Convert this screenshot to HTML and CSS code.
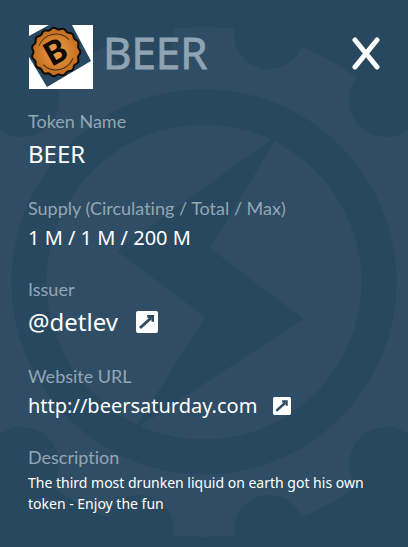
FILE: index.html
```
<!DOCTYPE html>
<html lang="en">
<head>
  <meta charset="UTF-8">
  <meta name="viewport" content="width=device-width, initial-scale=1.0">
  <title>BEER</title>
  <link rel="stylesheet" href="styles.css">
</head>
<body>
  <main class="token-card">
    <svg class="backdrop" width="510" height="510" viewBox="-51 27 510 510" aria-hidden="true">
      <circle class="light" cx="204" cy="282" r="255"/>
      <g class="dark">
        <circle cx="269" cy="34" r="35"/>
        <circle cx="139" cy="34" r="35"/>
        <circle cx="386" cy="100" r="37"/>
        <circle cx="22" cy="100" r="37"/>
        <circle cx="386" cy="464" r="37"/>
        <circle cx="22" cy="464" r="37"/>
        <circle cx="269" cy="530" r="35"/>
        <circle cx="139" cy="530" r="35"/>
        <path d="M279 134L117 251L205 317L134 430L303 319L210 248Z"/>
      </g>
      <circle class="ring" cx="204" cy="282" r="175"/>
    </svg>

    <header class="token-header">
      <svg class="logo" viewBox="0 0 64 64" role="img" aria-label="BEER logo">
        <defs>
          <radialGradient id="cap">
            <stop offset="0" stop-color="#eda24a"/>
            <stop offset="0.6" stop-color="#d4812f"/>
            <stop offset="1" stop-color="#bf6a1e"/>
          </radialGradient>
        </defs>
        <path fill="#fff" d="M0 0H64V64H0Z"/>
        <path fill="#28485f" d="M20 0H43L62 36L18 62L0 32V11Z"/>
        <path id="capEdge" fill="url(#cap)" stroke="#120b05" stroke-width="2" stroke-linejoin="round"/>
        <circle cx="27" cy="27" r="18" fill="none" stroke="#4a2a0c" stroke-width="1" stroke-dasharray="36 20.500" transform="rotate(20 27 27)"/>
        <text class="logo-letter" x="27" y="38" text-anchor="middle" transform="rotate(-29 27 27)">B</text>
      </svg>
      <h1 class="title">BEER</h1>
      <button type="button" class="close" aria-label="Close">
        <svg width="28" height="33" viewBox="0 0 28 33"><path d="M3 3L25 30M25 3L3 30"/></svg>
      </button>
    </header>

    <dl class="details">
      <div class="item">
        <dt>Token Name</dt>
        <dd class="large">BEER</dd>
      </div>
      <div class="item">
        <dt>Supply (Circulating / Total / Max)</dt>
        <dd>1 M / 1 M / 200 M</dd>
      </div>
      <div class="item">
        <dt>Issuer</dt>
        <dd class="large">
          <a href="#">@detlev
            <svg class="open-icon" viewBox="0 0 22 22"><rect width="22" height="22" rx="2"/><path class="shaft" d="M4 17L15 7"/><path d="M11 4H18V11L15.500 10.500V7H11.500Z"/></svg>
          </a>
        </dd>
      </div>
      <div class="item">
        <dt>Website URL</dt>
        <dd>
          <a href="http://beersaturday.com">http://beersaturday.com
            <svg class="open-icon" viewBox="0 0 22 22"><rect width="22" height="22" rx="2"/><path class="shaft" d="M4 17L15 7"/><path d="M11 4H18V11L15.500 10.500V7H11.500Z"/></svg>
          </a>
        </dd>
      </div>
      <div class="item">
        <dt>Description</dt>
        <dd class="description">The third most drunken liquid on earth got his own token - Enjoy the fun</dd>
      </div>
    </dl>
  </main>

  <script>
    // scalloped edge of the bottle cap
    let d = '';
    for (let i = 0; i <= 120; i++) {
      const a = i / 120 * Math.PI * 2;
      const r = 23.5 + Math.cos(a * 15) * 0.9;
      d += (i ? 'L' : 'M') + (27 + r * Math.cos(a)).toFixed(1) + ' ' + (27 + r * Math.sin(a)).toFixed(1);
    }
    document.getElementById('capEdge').setAttribute('d', d + 'Z');
  </script>
</body>
</html>
```

FILE: styles.css
```
* {
  box-sizing: border-box;
}
body {
  margin: 0;
  background: #28485f;
  color: #fff;
  font-family: 'Noto Sans', 'Open Sans', sans-serif;
}
.token-card {
  position: relative;
  min-height: 100vh;
  padding: 25px 28px;
  overflow: hidden;
}
.backdrop {
  position: absolute;
  top: 27px;
  left: 50%;
  margin-left: -255px;
}
.light {
  fill: #2f4d64;
}
.dark {
  fill: #28485f;
}
.ring {
  fill: none;
  stroke: #28485f;
  stroke-width: 35px;
}
.token-header {
  position: relative;
  display: flex;
  align-items: center;
  height: 64px;
}
.logo {
  width: 64px;
  height: 64px;
  margin-left: 1px;
}
.logo-letter {
  font: bold 33px Roboto, sans-serif;
  fill: #120b05;
}
.title {
  flex: 1;
  margin: 0 0 10px 10px;
  font-family: 'Open Sans', sans-serif;
  font-size: 44px;
  line-height: 54px;
  font-weight: 400;
  color: #8fa3b3;
  -webkit-text-stroke: 1px #8fa3b3;
}
.close {
  display: flex;
  margin-bottom: 8px;
  padding: 0;
  border: none;
  background: none;
  cursor: pointer;
}
.close path {
  fill: none;
  stroke: #fff;
  stroke-width: 5px;
  stroke-linecap: round;
}
.details {
  position: relative;
  display: flex;
  flex-direction: column;
  gap: 21px;
  margin: 20px 0 0;
}
dt {
  font-family: Lato, sans-serif;
  font-size: 18px;
  line-height: 24px;
  font-variant-ligatures: none;
  color: #93a6b4;
}
dd {
  margin: 0;
  font-size: 20px;
  line-height: 36px;
}
dd a {
  display: flex;
  align-items: center;
  gap: 16px;
  color: #fff;
  text-decoration: none;
}
.large {
  font-size: 24px;
  line-height: 42px;
}
.large a {
  gap: 18px;
}
.open-icon {
  width: 18px;
  height: 18px;
}
.large .open-icon {
  width: 22px;
  height: 22px;
}
.open-icon rect {
  fill: #fff;
}
.open-icon path {
  fill: #2c4b62;
}
.open-icon .shaft {
  stroke: #2c4b62;
  stroke-width: 3px;
}
.description {
  padding-top: 3px;
  font-size: 14px;
  line-height: 21px;
}
```
